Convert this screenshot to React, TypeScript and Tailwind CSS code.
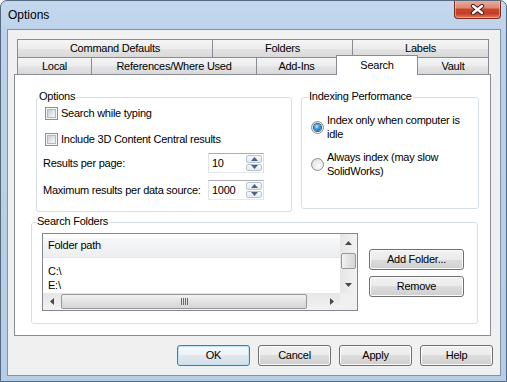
import React from 'react'

const winBtn =
  'h-[21px] flex items-center justify-center rounded-[3px] border border-[#707070] bg-[linear-gradient(to_bottom,#f2f2f2_0%,#ebebeb_50%,#dddddd_50%,#cfcfcf_100%)] shadow-[inset_0_0_0_1px_#fbfbfb]'
const okBtn =
  'h-[21px] flex items-center justify-center rounded-[3px] border border-[#3c7fb1] bg-[linear-gradient(to_bottom,#f4f8fb_0%,#edf2f6_50%,#e0e7ed_50%,#d6dfe6_100%)] shadow-[inset_0_0_0_1px_#bfe3f7]'
const tabBg = 'bg-[linear-gradient(to_bottom,#f5f5f5_0%,#ececec_50%,#e3e3e3_55%,#d9d9d9_100%)]'

const Button = ({ label, w, def }: { label: string; w: string; def?: boolean }) => (
  <div className={`${w} ${def ? okBtn : winBtn}`}>{label}</div>
)

const Tab = ({ label, w, first }: { label: string; w: string; first?: boolean }) => (
  <div
    className={`${w} h-full flex items-center justify-center border-t border-r border-[#898c95] ${first ? 'border-l' : ''} ${tabBg}`}
  >
    {label}
  </div>
)

const Group = ({
  title,
  legendMl,
  className,
  children,
}: {
  title: string
  legendMl: string
  className: string
  children: React.ReactNode
}) => (
  <fieldset className={`border border-[#d5dfe5] rounded-[3px] ${className}`}>
    <legend className={`${legendMl} px-[1px] leading-[12px] pb-[3px]`}>{title}</legend>
    {children}
  </fieldset>
)

const CheckBox = ({ label, className }: { label: string; className: string }) => (
  <div className={`flex items-center gap-[3px] pl-[8px] h-[13px] ${className}`}>
    <div className="w-[13px] h-[13px] border border-[#8e8f8f] bg-[#f4f4f4] p-px">
      <div className="w-full h-full border border-[#b4b8bd] bg-[linear-gradient(135deg,#c9cdd2_0%,#e6e8ea_60%,#f7f7f7_100%)]" />
    </div>
    <span>{label}</span>
  </div>
)

const Radio = ({ on }: { on?: boolean }) => (
  <div className="w-[13px] h-[13px] shrink-0 rounded-full border border-[#8e8f8f] bg-[radial-gradient(circle_at_60%_65%,#fdfdfd_0%,#e9e9e9_55%,#cfcfcf_100%)] flex items-center justify-center">
    {on && (
      <div className="w-[7px] h-[7px] rounded-full bg-[radial-gradient(circle_at_40%_35%,#bfe7fb_0%,#3f9ad6_40%,#0e5490_100%)] shadow-[0_0_0_1px_#1c5f95]" />
    )}
  </div>
)

const Tri = ({ dir, color = '#4a4a4a' }: { dir: 'up' | 'down' | 'left' | 'right'; color?: string }) => {
  const d = {
    up: 'M0 4 L3.5 0 L7 4Z',
    down: 'M0 0 L7 0 L3.5 4Z',
    left: 'M4 0 L4 7 L0 3.5Z',
    right: 'M0 0 L4 3.5 L0 7Z',
  }[dir]
  const horiz = dir === 'up' || dir === 'down'
  return (
    <svg width={horiz ? 7 : 4} height={horiz ? 4 : 7} viewBox={horiz ? '0 0 7 4' : '0 0 4 7'}>
      <path d={d} fill={color} />
    </svg>
  )
}

const Spin = ({ value }: { value: string }) => (
  <div className="w-[56px] h-[20px] flex border border-[#abadb3] border-l-[#e2e3ea] border-r-[#dbdfe6] border-b-[#e3e9ef] bg-white">
    <div className="flex-1 pl-[3px] flex items-center">{value}</div>
    <div className="w-[18px] flex flex-col gap-px p-px">
      <div className="flex-1 rounded-[2px] border border-[#b8c3cf] bg-[linear-gradient(to_bottom,#f7f9fb,#e4e9ee)] flex items-center justify-center">
        <Tri dir="up" color="#4d6185" />
      </div>
      <div className="flex-1 rounded-[2px] border border-[#b8c3cf] bg-[linear-gradient(to_bottom,#f7f9fb,#e4e9ee)] flex items-center justify-center">
        <Tri dir="down" color="#4d6185" />
      </div>
    </div>
  </div>
)

const ListView = () => (
  <div className="w-[316px] h-[78px] border border-[#828790] bg-white flex flex-col">
    <div className="flex h-[59px]">
      <div className="flex-1 flex flex-col overflow-hidden">
        <div className="h-[24px] shrink-0 pl-[5px] flex items-center border-b border-[#e5e5e5] bg-[linear-gradient(to_bottom,#ffffff_0%,#ffffff_15%,#f5f6f7_20%,#eceef0_100%)]">
          Folder path
        </div>
        <div className="mt-[6px] pl-[5px] leading-[14px]">C:\</div>
        <div className="pl-[5px] leading-[14px]">E:\</div>
      </div>
      <div className="w-[17px] flex flex-col bg-[linear-gradient(to_right,#e6e6e6,#f2f2f2)]">
        <div className="h-[17px] flex items-center justify-center">
          <Tri dir="up" />
        </div>
        <div className="mt-[2px] h-[16px] mx-px rounded-[2px] border border-[#979797] bg-[linear-gradient(to_right,#f3f3f3,#e2e2e2_50%,#d6d6d6)]" />
        <div className="flex-1" />
        <div className="h-[17px] flex items-center justify-center">
          <Tri dir="down" />
        </div>
      </div>
    </div>
    <div className="flex h-[17px]">
      <div className="flex-1 flex bg-[linear-gradient(to_bottom,#e6e6e6,#f2f2f2)]">
        <div className="w-[17px] flex items-center justify-center">
          <Tri dir="left" />
        </div>
        <div className="ml-[1px] w-[246px] my-px rounded-[2px] border border-[#979797] bg-[linear-gradient(to_bottom,#f3f3f3,#e2e2e2_50%,#d6d6d6)] flex items-center justify-center">
          <div className="flex gap-px">
            {[0, 1, 2, 3].map((i) => (
              <div key={i} className="w-px h-[7px] bg-[#6a6a6a]" />
            ))}
          </div>
        </div>
        <div className="flex-1" />
        <div className="w-[17px] flex items-center justify-center">
          <Tri dir="right" />
        </div>
      </div>
      <div className="w-[17px] bg-[#f0f0f0]" />
    </div>
  </div>
)

const App = () => {
  return (
    <div className="w-[507px] h-[382px] flex flex-col overflow-hidden rounded-t-[7px] border border-[#56687d] bg-[linear-gradient(to_bottom,#c4d8ee_0%,#bcd2ea_10%,#b6cde7_100%)] font-['Liberation_Sans',Arial,sans-serif] text-[11px] tracking-[-0.25px] text-black">
      {/* title bar */}
      <div className="h-[28px] shrink-0 flex justify-between">
        <div className="pl-[7px] flex items-center text-[12px] tracking-normal">Options</div>
        <div className="-mt-px mr-[5px] w-[47px] h-[19px] rounded-b-[4px] border border-[#7b2b1d] border-t-0 bg-[linear-gradient(to_bottom,#eab0a3_0%,#dd8572_45%,#c7472e_50%,#c43e24_75%,#e07c5f_100%)] shadow-[inset_0_0_0_1px_rgba(255,220,210,0.45)] flex items-center justify-center">
          <svg width="15" height="11" viewBox="0 0 15 11">
            <path d="M3 2 L12 9 M12 2 L3 9" stroke="#4a1a12" strokeWidth="4.2" strokeLinecap="round" />
            <path d="M3 2 L12 9 M12 2 L3 9" stroke="#ffffff" strokeWidth="2.3" strokeLinecap="round" />
          </svg>
        </div>
      </div>

      {/* client area */}
      <div className="ml-[6px] mr-[5px] h-[347px] shrink-0 border border-[#8193a7] bg-[#f0f0f0] flex flex-col">
        <div className="ml-[6px] mt-[9px] w-[477px] flex flex-col">
          <div className="flex h-[18px] ml-[3px]">
            <Tab label="Command Defaults" w="w-[196px]" first />
            <Tab label="Folders" w="w-[140px]" />
            <Tab label="Labels" w="w-[136px]" />
          </div>
          <div className="flex h-[17px] ml-[3px]">
            <Tab label="Local" w="w-[75px]" first />
            <Tab label="References/Where Used" w="w-[165px]" />
            <Tab label="Add-Ins" w="w-[80px]" />
            <div className="relative z-10 -ml-px -mt-[2px] w-[82px] h-[20px] flex items-center justify-center pb-[1px] border-t border-l border-r border-[#898c95] bg-white">
              Search
            </div>
            <Tab label="Vault" w="w-[71px]" />
          </div>

          <div className="w-[477px] h-[262px] border border-[#898c95] bg-white flex flex-col">
            <div className="flex items-start ml-[21px] mt-[15px] gap-[9px]">
              <Group title="Options" legendMl="ml-[1px]" className="w-[256px] h-[122px] flex flex-col">
                <CheckBox label="Search while typing" className="mt-[2px]" />
                <CheckBox label="Include 3D Content Central results" className="mt-[13px]" />
                <div className="mt-[7px] flex items-center pl-[6px] pr-[27px]">
                  <span className="flex-1">Results per page:</span>
                  <Spin value="10" />
                </div>
                <div className="mt-[7px] flex items-center pl-[6px] pr-[27px]">
                  <span className="flex-1">Maximum results per data source:</span>
                  <Spin value="1000" />
                </div>
              </Group>

              <Group title="Indexing Performance" legendMl="ml-[6px]" className="w-[178px] h-[119px] flex flex-col">
                <div className="mt-[8px] pl-[9px] flex flex-col gap-[9px] leading-[14px]">
                  <div className="flex items-center gap-[3px]">
                    <Radio on />
                    <span>
                      Index only when computer is
                      <br />
                      idle
                    </span>
                  </div>
                  <div className="flex items-center gap-[3px]">
                    <Radio />
                    <span>
                      Always index (may slow
                      <br />
                      SolidWorks)
                    </span>
                  </div>
                </div>
              </Group>
            </div>

            <Group title="Search Folders" legendMl="ml-[4px]" className="ml-[16px] mt-[3px] w-[447px] h-[109px]">
              <div className="flex items-start ml-[10px] mt-[3px]">
                <ListView />
                <div className="ml-[11px] mt-[16px] flex flex-col gap-[6px]">
                  <Button label="Add Folder..." w="w-[95px]" />
                  <Button label="Remove" w="w-[95px]" />
                </div>
              </div>
            </Group>
          </div>
        </div>

        <div className="mt-[9px] pr-[7px] flex justify-end gap-[8px]">
          <Button label="OK" w="w-[73px]" def />
          <Button label="Cancel" w="w-[73px]" />
          <Button label="Apply" w="w-[73px]" />
          <Button label="Help" w="w-[73px]" />
        </div>
      </div>
    </div>
  )
}

export default App
